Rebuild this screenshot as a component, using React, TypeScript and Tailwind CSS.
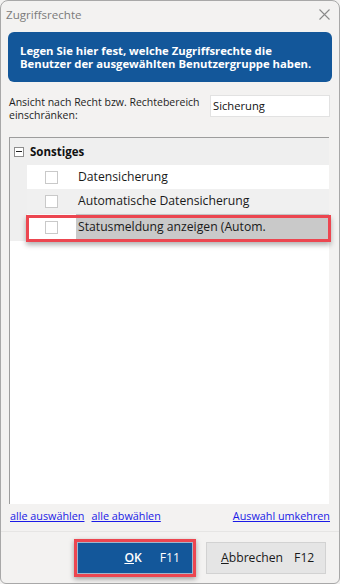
import React from "react";

const font = { fontFamily: '"Open Sans", "Noto Sans", "Liberation Sans", sans-serif' };

function Check() {
  return <div className="w-[13px] h-[13px] border border-[#c9c9c9] bg-white shrink-0" />;
}

export default function App() {
  return (
    <div className="w-[340px] h-[584px] bg-[#f3f2f1] overflow-hidden" style={font}>
      <div className="w-[340px] h-[584px] border border-[#a8a8a8] rounded-t-[8px] rounded-b-[6px] flex flex-col bg-[#f3f2f1]">
        {/* title */}
        <div className="h-[27px] flex items-center justify-between pl-[5px] pr-[9px] shrink-0">
          <span className="text-[11.6px] text-[#7b7b7b] leading-none">Zugriffsrechte</span>
          <svg width="11" height="11" viewBox="0 0 11 11">
            <path d="M0.5 0.5 L10.5 10.5 M10.5 0.5 L0.5 10.5" stroke="#8a8a8a" strokeWidth="1.1" />
          </svg>
        </div>
        {/* blue info */}
        <div className="mx-[7px] mt-[4px] h-[50px] rounded-[6px] bg-[#13579a] flex flex-col justify-center pl-[12px] shrink-0">
          <p className="text-white font-bold text-[11.3px] leading-[13px] whitespace-nowrap">
            Legen Sie hier fest, welche Zugriffsrechte die<br />Benutzer der ausgewählten Benutzergruppe haben.
          </p>
        </div>
        {/* filter */}
        <div className="flex mt-[13px] pl-[8px] pr-[9px] h-[34px] shrink-0">
          <div className="text-[10.5px] leading-[12.5px] text-[#1e1e1e] whitespace-nowrap pt-[1px]">
            Ansicht nach Recht bzw. Rechtebereich<br />einschränken:
          </div>
          <div className="ml-auto w-[120px] h-[22px] bg-white border border-[#e2e2e2] flex items-center pl-[2px] text-[11.2px] text-[#111]">Sicherung</div>
        </div>
        {/* list */}
        <div className="ml-[8px] mr-[10px] mt-[8px] h-[367px] bg-white border-l border-t border-[#9d9d9d] flex flex-col shrink-0">
          <div className="h-[27px] bg-[#efefef] flex items-center pl-[4px] shrink-0">
            <div className="w-[10px] h-[10px] border border-[#8d8d8d] bg-white flex items-center justify-center">
              <div className="w-[6px] h-[1px] bg-[#222]" />
            </div>
            <span className="ml-[6px] font-bold text-[11.5px] text-[#111]">Sonstiges</span>
          </div>
          <div className="flex">
            <div className="w-[17px] bg-[#efefef]" />
            <div className="flex-1 flex flex-col">
              <div className="h-[24px] bg-white flex items-center pl-[18px]">
                <Check />
                <span className="ml-[20px] text-[12.2px] text-[#1a1a1a]">Datensicherung</span>
              </div>
              <div className="h-[25px] bg-[#f0f0f0] flex items-center pl-[18px]">
                <Check />
                <span className="ml-[20px] text-[12.2px] text-[#1a1a1a]">Automatische Datensicherung</span>
              </div>
              <div className="relative h-[27px] flex items-stretch">
                <div className="w-[49px] bg-white flex items-center pl-[18px]">
                  <Check />
                </div>
                <div className="flex-1 bg-[#c9c9c9] flex items-center pl-[2px] text-[12.2px] text-[#1a1a1a]">
                  Statusmeldung anzeigen (Autom.
                </div>
                <div className="absolute left-[-1px] right-[-2px] top-[1px] bottom-[-1px] border-[3px] border-[#ec4650] shadow-[0_3px_5px_rgba(0,0,0,0.3)] pointer-events-none" />
              </div>
            </div>
          </div>
        </div>
        {/* links */}
        <div className="flex items-center mx-[9px] mt-[2px] h-[20px] text-[10.8px] text-[#1a1ae6] shrink-0">
          <span className="underline">alle auswählen</span>
          <span className="underline ml-[7px]">alle abwählen</span>
          <span className="underline ml-auto">Auswahl umkehren</span>
        </div>
        {/* footer */}
        <div className="mt-[5px] border-t border-[#e6e5e4] flex-1 flex justify-end items-start pt-[7px] pr-[13px] gap-[10px]">
          <div className="p-[3px] bg-[#ec4650] shadow-[0_2px_5px_rgba(0,0,0,0.35)]">
            <div className="w-[116px] h-[32px] bg-[#13579a] border border-[#9fb5cc] flex items-center justify-end pr-[12px] text-white text-[12.2px]">
              <span className="font-semibold"><span className="underline">O</span>K</span>
              <span className="ml-[18px]">F11</span>
            </div>
          </div>
          <div className="mt-[3px] w-[120px] h-[32px] bg-[#e5e5e5] border border-[#d2d2d2] flex items-center pl-[14px] text-[12.2px] text-[#1a1a1a]">
            <span><span className="underline">A</span>bbrechen</span>
            <span className="ml-[11px]">F12</span>
          </div>
        </div>
      </div>
    </div>
  );
}
